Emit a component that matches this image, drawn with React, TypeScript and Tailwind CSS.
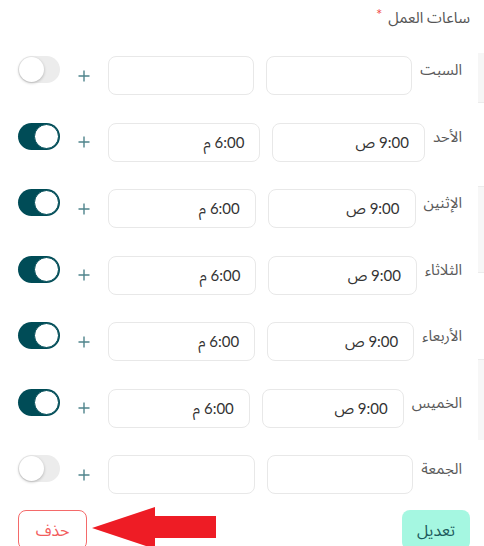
import { useState } from 'react'

type Day = { name: string; from: string; to: string; on: boolean }

const days: Day[] = [
    { name: 'السبت', from: '', to: '', on: false },
    { name: 'الأحد', from: '9:00 ص', to: '6:00 م', on: true },
    { name: 'الإثنين', from: '9:00 ص', to: '6:00 م', on: true },
    { name: 'الثلاثاء', from: '9:00 ص', to: '6:00 م', on: true },
    { name: 'الأربعاء', from: '9:00 ص', to: '6:00 م', on: true },
    { name: 'الخميس', from: '9:00 ص', to: '6:00 م', on: true },
    { name: 'الجمعة', from: '', to: '', on: false },
]

function Toggle({ on, onClick }: { on: boolean; onClick: () => void }) {
    return (
        <button
            onClick={onClick}
            dir='ltr'
            className={`w-[42px] h-[27px] rounded-full flex items-center p-[1px] shrink-0 ${on ? 'bg-[#004c57] justify-end' : 'bg-[#ececec] justify-start'}`}
        >
            <span className={`block w-[25px] h-[25px] rounded-full bg-white ${on ? 'border border-[#004c57]' : 'shadow-[0_1px_3px_rgba(0,0,0,0.25)]'}`}></span>
        </button>
    )
}

function App() {
    const [rows, setRows] = useState<Day[]>(days)

    function flip(i: number) {
        setRows(rows.map((r, j) => (j == i ? { ...r, on: !r.on } : r)))
    }

    return (
        <div dir='rtl' className='w-[484px] h-[546px] overflow-hidden bg-white flex' style={{ fontFamily: "Lato, 'Noto Sans Arabic', 'DejaVu Sans', sans-serif" }}>
            {/* faint edge of the page behind the panel */}
            <div className='w-[6px] shrink-0 flex flex-col pt-[53px]'>
                <div className='h-[50px] shrink-0 bg-[#f6f6f6] border-b border-[#ececec]'></div>
                <div className='h-[84px] shrink-0 border-b border-[#ececec]'></div>
                <div className='h-[86px] shrink-0 bg-[#f7f7f7] border-b border-[#ececec]'></div>
                <div className='h-[87px] shrink-0 border-b border-[#ececec]'></div>
                <div className='h-[80px] shrink-0 bg-[#f7f7f7]'></div>
            </div>

            <div className='flex-1 flex flex-col'>
                <div className='shrink-0 pr-[8px] pt-[6px] h-[56px] text-[15px] text-[#555] flex items-start gap-[6px]'>
                    <span>ساعات العمل</span>
                    <span className='text-[#f04b4b] text-[15px] -mt-[3px]'>*</span>
                </div>

                <div className='shrink-0 flex flex-col gap-[27.5px] pr-[16px] pl-[18px]'>
                    {rows.map((d, i) => (
                        <div key={d.name} className='flex items-start h-[39px] shrink-0'>
                            <span className='text-[15px] text-[#5a5a5a] pt-[2px] ml-[8px] whitespace-nowrap'>{d.name}</span>
                            <div className='flex-1 h-[39px] border border-[#e8e8e8] rounded-[8px] flex items-center px-[15px] text-[15px] text-[#333]'>{d.from}</div>
                            <div className='flex-1 h-[39px] border border-[#e8e8e8] rounded-[8px] flex items-center px-[15px] text-[15px] text-[#333] mr-[12px]'>{d.to}</div>
                            <svg className='mx-[18px] self-center shrink-0' width='12' height='12' viewBox='0 0 12 12'>
                                <path d='M6 0.5V11.5M0.5 6H11.5' stroke='#4f848c' strokeWidth='1.4' />
                            </svg>
                            <Toggle on={d.on} onClick={() => flip(i)} />
                        </div>
                    ))}
                </div>

                <div className='shrink-0 relative flex justify-between items-start pr-[8px] pl-[18px] mt-[16px]'>
                    <button className='w-[68px] h-[40px] rounded-[8px] bg-[#a5f7e1] text-[#1c5a5c] text-[16px]'>تعديل</button>
                    <button className='w-[69px] h-[40px] rounded-[8px] border border-[#f46a6a] text-[#f25c5c] text-[16px]'>حذف</button>
                    <svg className='absolute left-[92px] top-[-3px]' width='124' height='44' viewBox='0 0 124 44'>
                        <polygon points='0,21 63,0 63,9 124,9 124,31 63,31 63,42' fill='#ee1c25' />
                    </svg>
                </div>
            </div>
        </div>
    )
}

export default App
